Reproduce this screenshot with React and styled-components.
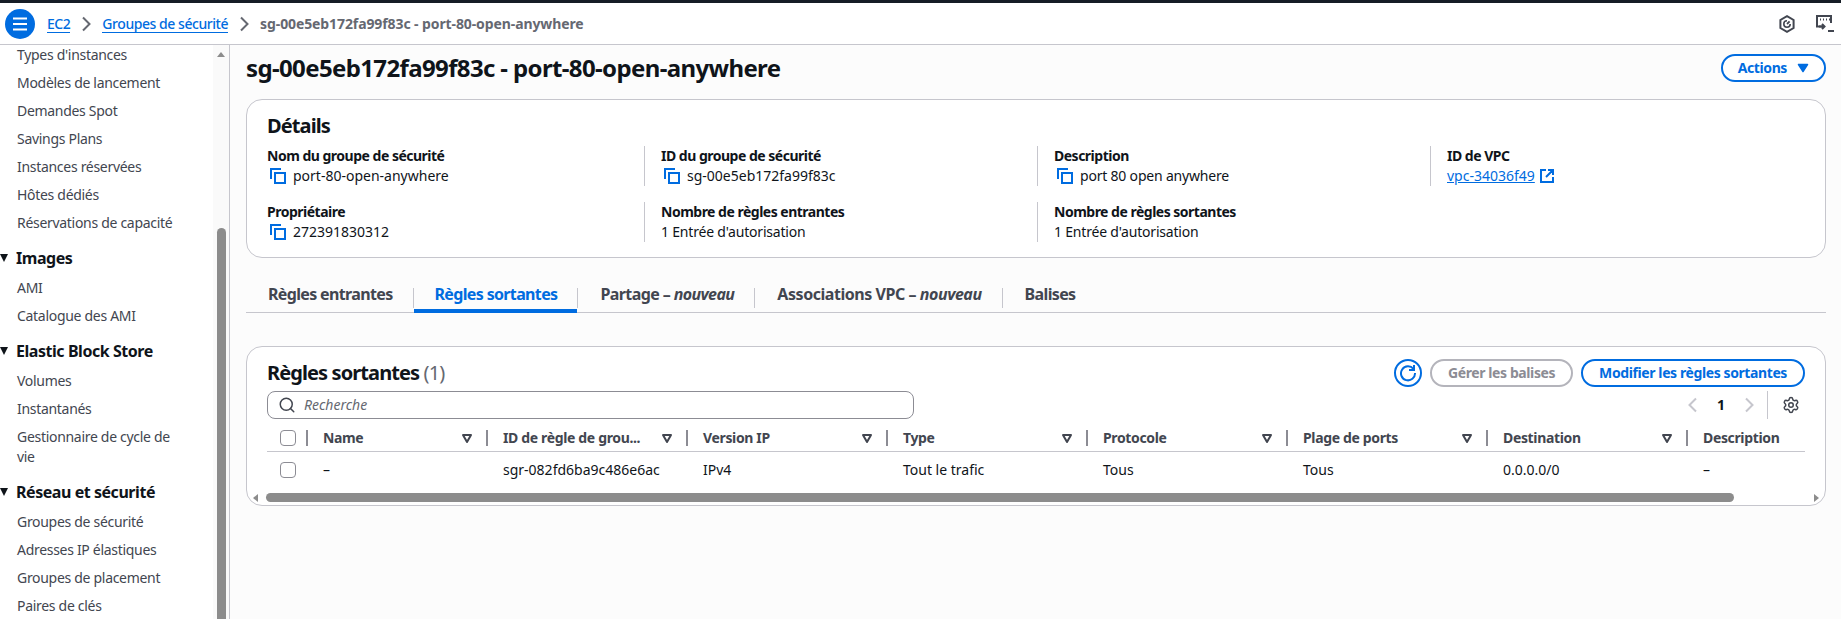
import React from "react";
import styled, { createGlobalStyle } from "styled-components";
import { Search, Settings } from "lucide-react";

const blue = "#006ce0";
const ink = "#0f141a";
const slate = "#424650";
const line = "#c6c6cd";

const GlobalStyle = createGlobalStyle`
  html, body { margin: 0; padding: 0; height: 100%; overflow: hidden; }
  body { font-family: "Noto Sans", "Open Sans", sans-serif; font-size: 14px; line-height: 20px; color: ${ink}; background: #fcfcfc; }
  * { box-sizing: border-box; }
`;

const Page = styled.div`
  width: 1841px;
  height: 619px;
  display: flex;
  flex-direction: column;
  overflow: hidden;
  border-top: 3px solid #161d26;
`;

const TopBar = styled.header`
  height: 42px;
  flex: none;
  display: flex;
  align-items: center;
  padding: 0 5px;
  background: #fff;
  border-bottom: 1px solid ${line};
`;

const MenuButton = styled.button`
  width: 30px;
  height: 30px;
  padding: 0;
  border: 0;
  border-radius: 50%;
  background: ${blue};
  display: flex;
  align-items: center;
  justify-content: center;
  margin-right: 12px;
`;

const Crumb = styled.a`
  color: ${blue};
  font-weight: 500;
  letter-spacing: -0.45px;
  border-bottom: 1px solid ${blue};
  line-height: 17px;
`;

const CrumbCurrent = styled.span`
  color: #656871;
  font-weight: 700;
  letter-spacing: -0.1px;
`;

const CrumbSep = styled.span`
  width: 32px;
  display: flex;
  justify-content: center;
  color: #656871;
`;

const TopIcons = styled.div`
  margin-left: auto;
  display: flex;
  gap: 21px;
  align-items: center;
  padding-right: 2px;
`;

const Body = styled.div`
  flex: 1;
  min-height: 0;
  display: flex;
`;

const Sidebar = styled.nav`
  position: relative;
  width: 230px;
  flex: none;
  background: #fff;
  border-right: 1px solid ${line};
  overflow: hidden;
`;

const NavTrack = styled.div`
  position: absolute;
  top: 0;
  right: 0;
  bottom: 0;
  width: 16px;
  background: #fafafa;
`;

const NavArrow = styled.div`
  position: absolute;
  top: 7px;
  left: 4px;
  border-left: 4px solid transparent;
  border-right: 4px solid transparent;
  border-bottom: 5px solid #8c8c8c;
`;

const NavThumb = styled.div`
  position: absolute;
  top: 183px;
  left: 4px;
  width: 9px;
  bottom: -10px;
  border-radius: 5px;
  background: #8c8c8c;
`;

const NavItem = styled.div`
  padding-left: 17px;
  width: 190px;
  margin-bottom: 8px;
  color: ${slate};
  letter-spacing: -0.3px;
`;

const NavHeading = styled.div`
  display: flex;
  align-items: center;
  gap: 8px;
  margin: 15px 0 10px;
  font-size: 16px;
  font-weight: 700;
  color: ${ink};
  letter-spacing: -0.45px;
`;

const HeadingCaret = styled.span`
  width: 0;
  height: 0;
  border-left: 4.5px solid transparent;
  border-right: 4.5px solid transparent;
  border-top: 8px solid ${ink};
`;

const Main = styled.main`
  flex: 1;
  min-width: 0;
  padding: 9px 15px 0 16px;
`;

const TitleRow = styled.div`
  display: flex;
  align-items: center;
  justify-content: space-between;
  height: 28px;
  margin-bottom: 17px;
`;

const Title = styled.h1`
  margin: 0;
  font-size: 24px;
  line-height: 30px;
  font-weight: 700;
  letter-spacing: -0.63px;
`;

const PillButton = styled.button`
  height: 28px;
  padding: 0 ${(p) => p.$pad || 16}px;
  display: inline-flex;
  align-items: center;
  gap: 10px;
  border-radius: 20px;
  border: 2px solid ${(p) => (p.$disabled ? "#b4b4bb" : blue)};
  background: #fff;
  color: ${(p) => (p.$disabled ? "#8c8c94" : blue)};
  font: 700 14px/20px "Noto Sans", sans-serif;
  letter-spacing: -0.4px;
  white-space: nowrap;
`;

const Card = styled.section`
  background: #fff;
  border: 1px solid ${line};
  border-radius: 16px;
`;

const DetailsCard = styled(Card)`
  height: 159px;
  padding: 14px 20px 0;
`;

const CardTitle = styled.h2`
  margin: 0 0 8px;
  font-size: 20px;
  line-height: 24px;
  font-weight: 700;
  letter-spacing: -0.9px;
`;

const DetailGrid = styled.div`
  display: grid;
  grid-template-columns: 377px repeat(3, 393px);
  grid-auto-rows: 40px;
  row-gap: 16px;
`;

const Detail = styled.div`
  padding-left: ${(p) => (p.$first ? 0 : 16)}px;
  border-left: ${(p) => (p.$first ? "0" : `1px solid ${line}`)};
`;

const DetailLabel = styled.div`
  font-weight: 700;
  letter-spacing: -0.5px;
`;

const DetailValue = styled.div`
  display: flex;
  align-items: center;
  gap: 7px;
  padding-left: ${(p) => (p.$copy ? 3 : 0)}px;
  letter-spacing: ${(p) => (p.$tight ? -0.2 : 0)}px;
`;

const VpcLink = styled.a`
  color: ${blue};
  text-decoration: underline;
  display: inline-flex;
  align-items: center;
  gap: 5px;
`;

const Tabs = styled.div`
  display: flex;
  align-items: flex-end;
  height: 55px;
  border-bottom: 1px solid ${line};
  margin-bottom: 33px;
`;

const Tab = styled.div`
  height: 29px;
  margin-bottom: -1px;
  padding: 0 20px 0 ${(p) => (p.$active ? 21 : 22)}px;
  font-size: 16px;
  font-weight: 700;
  line-height: 20px;
  letter-spacing: ${(p) => p.$spacing || -0.65}px;
  color: ${(p) => (p.$active ? blue : slate)};
  border-bottom: 4px solid ${(p) => (p.$active ? blue : "transparent")};
  em { font-weight: 700; font-style: italic; }
`;

const TabDivider = styled.span`
  width: 1px;
  height: 20px;
  align-self: flex-start;
  margin-top: 30px;
  background: ${line};
`;

const TableCard = styled(Card)`
  height: 160px;
  padding: 12px 20px 0;
  overflow: hidden;
  position: relative;
`;

const TableHead = styled.div`
  display: flex;
  align-items: center;
  justify-content: space-between;
  height: 28px;
`;

const TableTitle = styled.h2`
  margin: 0;
  font-size: 20px;
  line-height: 28px;
  font-weight: 700;
  letter-spacing: -0.9px;
  span { font-weight: 400; color: #656871; }
`;

const HeadActions = styled.div`
  display: flex;
  align-items: center;
  gap: 8px;
`;

const RefreshButton = styled.button`
  width: 28px;
  height: 28px;
  padding: 0;
  border: 2px solid ${blue};
  border-radius: 50%;
  background: #fff;
  display: flex;
  align-items: center;
  justify-content: center;
`;

const ToolRow = styled.div`
  display: flex;
  align-items: center;
  justify-content: space-between;
  margin-top: 4px;
  height: 28px;
`;

const SearchBox = styled.div`
  width: 647px;
  height: 28px;
  display: flex;
  align-items: center;
  gap: 8px;
  padding-left: 10px;
  border: 1px solid #8c8c94;
  border-radius: 8px;
  color: #656871;
  font-style: italic;
  font-size: 14px;
  svg { color: ${slate}; }
`;

const Pager = styled.div`
  display: flex;
  align-items: center;
  height: 28px;
  font-weight: 700;
  color: ${ink};
`;

const PagerArrow = styled.span`
  width: 20px;
  display: flex;
  justify-content: center;
  color: #c6c6cd;
  transform: ${(p) => (p.$left ? "scaleX(-1)" : "none")};
`;

const PagerNum = styled.span`
  width: 36px;
  text-align: center;
`;

const PagerRule = styled.span`
  width: 1px;
  height: 28px;
  background: ${line};
  margin: 0 14px 0 8px;
`;

const PagerGear = styled.span`
  display: flex;
  margin-right: 5px;
  color: ${slate};
`;

const Row = styled.div`
  display: grid;
  grid-template-columns: 39px 180px repeat(6, 200px) 120px;
  align-items: center;
  height: ${(p) => p.$h}px;
  padding-top: ${(p) => (p.$head ? 6 : 0)}px;
  border-bottom: ${(p) => (p.$head ? `1px solid ${line}` : "0")};
`;

const HeadCell = styled.div`
  display: flex;
  align-items: center;
  justify-content: space-between;
  height: 16px;
  padding: 0 13px 0 15px;
  border-left: 2px solid #8c8c94;
  font-weight: 700;
  letter-spacing: -0.35px;
  color: ${slate};
  white-space: nowrap;
  line-height: 16px;
`;

const SelectCell = styled.div`
  display: flex;
  align-items: center;
  height: 16px;
  padding-left: 13px;
`;

const Check = styled.span`
  width: 16px;
  height: 16px;
  border: 1px solid #8c8c94;
  border-radius: 4px;
  background: #fff;
`;

const Cell = styled.div`
  padding-left: 17px;
  white-space: nowrap;
`;

const HScroll = styled.div`
  position: absolute;
  left: 0;
  right: 0;
  bottom: 3px;
  height: 9px;
  display: flex;
  align-items: center;
`;

const HThumb = styled.div`
  position: absolute;
  left: 19px;
  width: 1468px;
  height: 9px;
  border-radius: 5px;
  background: #8c8c8c;
`;

const HArrow = styled.span`
  position: absolute;
  ${(p) => (p.$right ? "right: 6px;" : "left: 6px;")}
  border-top: 4px solid transparent;
  border-bottom: 4px solid transparent;
  ${(p) => (p.$right ? "border-left: 5px solid #8c8c8c;" : "border-right: 5px solid #8c8c8c;")}
`;

const CopyIcon = () => (
  <svg width="16" height="16" viewBox="0 0 16 16" fill="none" stroke={blue} strokeWidth="2">
    <rect x="5" y="5" width="10" height="10" />
    <path d="M1 11V1h10" />
  </svg>
);

const FilterIcon = () => (
  <svg width="12" height="12" viewBox="0 0 12 12" fill="none" stroke={slate} strokeWidth="2">
    <path d="M2 3h8L6 10z" strokeLinejoin="round" />
  </svg>
);

const Chevron = () => (
  <svg width="10" height="16" viewBox="0 0 10 16" fill="none" stroke="currentColor" strokeWidth="2">
    <path d="M2 1.5 8.5 8 2 14.5" />
  </svg>
);

const navTop = ["Types d'instances", "Modèles de lancement", "Demandes Spot", "Savings Plans", "Instances réservées", "Hôtes dédiés", "Réservations de capacité"];
const navSections = [
  { title: "Images", items: ["AMI", "Catalogue des AMI"] },
  { title: "Elastic Block Store", items: ["Volumes", "Instantanés", "Gestionnaire de cycle de vie"] },
  { title: "Réseau et sécurité", items: ["Groupes de sécurité", "Adresses IP élastiques", "Groupes de placement", "Paires de clés"] },
];

const columns = ["Name", "ID de règle de grou...", "Version IP", "Type", "Protocole", "Plage de ports", "Destination"];
const rowValues = ["–", "sgr-082fd6ba9c486e6ac", "IPv4", "Tout le trafic", "Tous", "Tous", "0.0.0.0/0", "–"];

export default function App() {
  return (
    <Page>
      <GlobalStyle />
      <TopBar>
        <MenuButton aria-label="Menu">
          <svg width="16" height="14" viewBox="0 0 16 14" stroke="#fff" strokeWidth="2">
            <path d="M1 1.5h14M1 7h14M1 12.5h14" />
          </svg>
        </MenuButton>
        <Crumb>EC2</Crumb>
        <CrumbSep><Chevron /></CrumbSep>
        <Crumb>Groupes de sécurité</Crumb>
        <CrumbSep><Chevron /></CrumbSep>
        <CrumbCurrent>sg-00e5eb172fa99f83c - port-80-open-anywhere</CrumbCurrent>
        <TopIcons>
          <svg width="16" height="18" viewBox="0 0 16 18" fill="none" stroke={slate} strokeWidth="2">
            <path d="M8 1.2 14.6 5v8L8 16.8 1.4 13V5z" />
            <path d="M8 5.8A3.2 3.2 0 1 0 11.2 9" strokeWidth="1.6" />
            <path d="m8 9 2.6-2.6" strokeWidth="1.8" />
          </svg>
          <svg width="18" height="18" viewBox="0 0 18 18" fill="none" stroke={slate} strokeWidth="2">
            <path d="M6 11.5H1V1h14v7" />
            <path d="M4 4.5h1M7 4.5h1M10 4.5h1M13 4.5h1" strokeWidth="2" />
            <path d="M3 11.5h5M6 9l2.5 2.5L6 14M12 16h6" />
          </svg>
        </TopIcons>
      </TopBar>
      <Body>
        <Sidebar>
          {navTop.map((item) => <NavItem key={item}>{item}</NavItem>)}
          {navSections.map((section) => (
            <div key={section.title}>
              <NavHeading><HeadingCaret />{section.title}</NavHeading>
              {section.items.map((item) => <NavItem key={item}>{item}</NavItem>)}
            </div>
          ))}
          <NavTrack>
            <NavArrow />
            <NavThumb />
          </NavTrack>
        </Sidebar>
        <Main>
          <TitleRow>
            <Title>sg-00e5eb172fa99f83c - port-80-open-anywhere</Title>
            <PillButton $pad={15}>
              Actions
              <svg width="12" height="10" viewBox="0 0 12 10" fill={blue} stroke={blue} strokeWidth="1.5" strokeLinejoin="round">
                <path d="M1.5 1.5h9L6 8.5z" />
              </svg>
            </PillButton>
          </TitleRow>
          <DetailsCard>
            <CardTitle>Détails</CardTitle>
            <DetailGrid>
              <Detail $first>
                <DetailLabel>Nom du groupe de sécurité</DetailLabel>
                <DetailValue $copy><CopyIcon />port-80-open-anywhere</DetailValue>
              </Detail>
              <Detail>
                <DetailLabel>ID du groupe de sécurité</DetailLabel>
                <DetailValue $copy><CopyIcon />sg-00e5eb172fa99f83c</DetailValue>
              </Detail>
              <Detail>
                <DetailLabel>Description</DetailLabel>
                <DetailValue $copy $tight><CopyIcon />port 80 open anywhere</DetailValue>
              </Detail>
              <Detail>
                <DetailLabel>ID de VPC</DetailLabel>
                <DetailValue>
                  <VpcLink>
                    vpc-34036f49
                    <svg width="14" height="14" viewBox="0 0 14 14" fill="none" stroke={blue} strokeWidth="2">
                      <path d="M6 1H1v12h12V8M8 1h5v5M13 1 6 8" />
                    </svg>
                  </VpcLink>
                </DetailValue>
              </Detail>
              <Detail $first>
                <DetailLabel>Propriétaire</DetailLabel>
                <DetailValue $copy><CopyIcon />272391830312</DetailValue>
              </Detail>
              <Detail>
                <DetailLabel>Nombre de règles entrantes</DetailLabel>
                <DetailValue $tight>1 Entrée d'autorisation</DetailValue>
              </Detail>
              <Detail>
                <DetailLabel>Nombre de règles sortantes</DetailLabel>
                <DetailValue $tight>1 Entrée d'autorisation</DetailValue>
              </Detail>
            </DetailGrid>
          </DetailsCard>
          <Tabs>
            <Tab>Règles entrantes</Tab>
            <TabDivider />
            <Tab $active>Règles sortantes</Tab>
            <TabDivider />
            <Tab $spacing={-0.6}>Partage – <em>nouveau</em></Tab>
            <TabDivider />
            <Tab $spacing={-0.45}>Associations VPC – <em>nouveau</em></Tab>
            <TabDivider />
            <Tab>Balises</Tab>
          </Tabs>
          <TableCard>
            <TableHead>
              <TableTitle>Règles sortantes <span>(1)</span></TableTitle>
              <HeadActions>
                <RefreshButton aria-label="Actualiser">
                  <svg width="18" height="18" viewBox="0 0 18 18" fill="none" stroke={blue} strokeWidth="2">
                    <path d="M14.5 5A7 7 0 1 0 16 9" />
                    <path d="M15 1v5h-5" />
                  </svg>
                </RefreshButton>
                <PillButton $disabled>Gérer les balises</PillButton>
                <PillButton>Modifier les règles sortantes</PillButton>
              </HeadActions>
            </TableHead>
            <ToolRow>
              <SearchBox><Search size={18} strokeWidth={2} />Recherche</SearchBox>
              <Pager>
                <PagerArrow $left><Chevron /></PagerArrow>
                <PagerNum>1</PagerNum>
                <PagerArrow><Chevron /></PagerArrow>
                <PagerRule />
                <PagerGear><Settings size={18} strokeWidth={2} /></PagerGear>
              </Pager>
            </ToolRow>
            <Row $head $h={33}>
              <SelectCell><Check /></SelectCell>
              {columns.map((col) => (
                <HeadCell key={col}>{col}<FilterIcon /></HeadCell>
              ))}
              <HeadCell>Description</HeadCell>
            </Row>
            <Row $h={36}>
              <SelectCell><Check /></SelectCell>
              {rowValues.map((value, i) => <Cell key={i}>{value}</Cell>)}
            </Row>
            <HScroll>
              <HArrow />
              <HThumb />
              <HArrow $right />
            </HScroll>
          </TableCard>
        </Main>
      </Body>
    </Page>
  );
}
